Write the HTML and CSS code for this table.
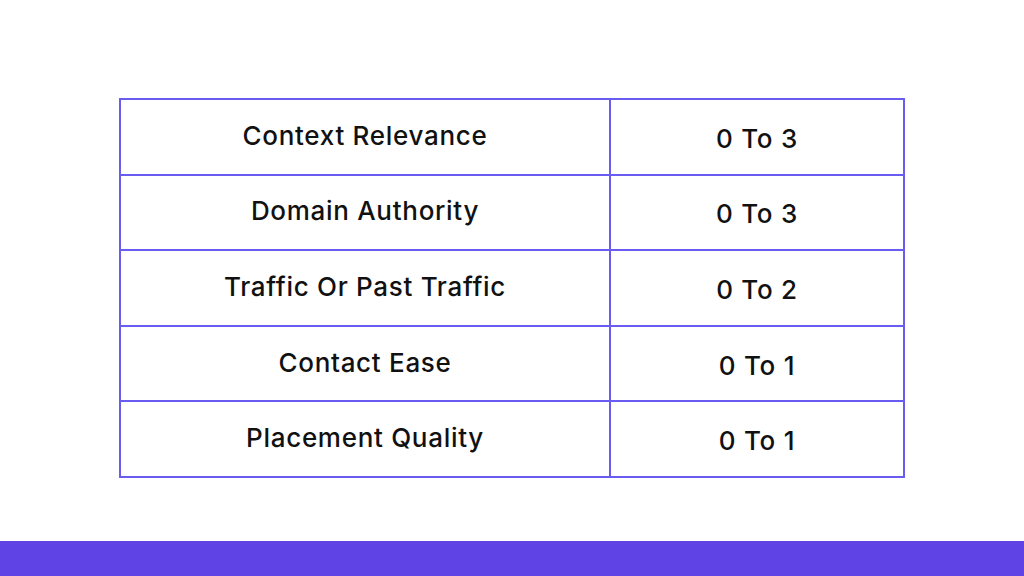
FILE: index.html
```html
<!DOCTYPE html>
<html>
<head>
<meta charset="utf-8">
<link rel="stylesheet" href="styles.css">
</head>
<body>
<div class="page">
  <main class="content">
    <table class="score-table">
      <tr><td class="name">Context Relevance</td><td class="range">0 To 3</td></tr>
      <tr><td class="name">Domain Authority</td><td class="range">0 To 3</td></tr>
      <tr><td class="name">Traffic Or Past Traffic</td><td class="range">0 To 2</td></tr>
      <tr><td class="name">Contact Ease</td><td class="range">0 To 1</td></tr>
      <tr><td class="name">Placement Quality</td><td class="range">0 To 1</td></tr>
    </table>
  </main>
  <footer class="bar"></footer>
</div>
</body>
</html>
```
FILE: styles.css
```css
html, body {
  margin: 0;
  padding: 0;
  background: #ffffff;
}
.page {
  width: 1024px;
  height: 576px;
  display: flex;
  flex-direction: column;
  font-family: "Inter", "Liberation Sans", sans-serif;
  color: #111111;
}
.content {
  flex: 1;
  padding-top: 98px;
  padding-left: 119px;
}
.score-table {
  border-collapse: collapse;
  width: 786px;
}
.score-table td {
  border: 2px solid #6b5cf1;
  padding: 0;
  text-align: center;
  font-size: 26px;
  font-weight: 500;
  letter-spacing: 0.7px;
}
.score-table td.name {
  width: 488px;
  height: 70.6px;
  padding-bottom: 3px;
}
.score-table td.range {
  padding-top: 3px;
}
.bar {
  height: 35px;
  background: #6043e4;
}
```
